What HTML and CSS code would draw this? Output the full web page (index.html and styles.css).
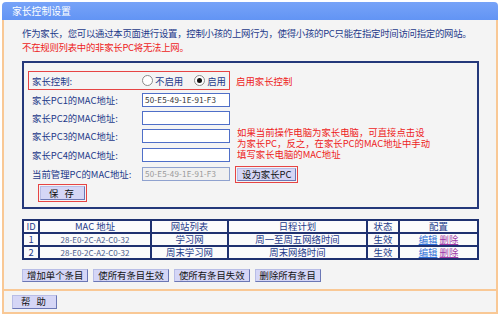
FILE: index.html
```html
<!DOCTYPE html>
<html lang="zh-CN">
<head>
    <meta charset="UTF-8">
    <title>家长控制设置</title>
    <link rel="stylesheet" href="styles.css">
</head>
<body>
<div class="page">
    <div class="title">家长控制设置</div>

    <div class="content">
        <p class="intro">作为家长，您可以通过本页面进行设置，控制小孩的上网行为，使得小孩的PC只能在指定时间访问指定的网站。</p>
        <p class="intro warn">不在规则列表中的非家长PC将无法上网。</p>

        <div class="panel">
            <div class="form">
                <div class="row switch mark">
                    <span class="label">家长控制:</span>
                    <span class="radio"></span><span class="opt">不启用</span>
                    <span class="radio on"></span><span class="opt">启用</span>
                </div>
                <div class="side hint">启用家长控制</div>

                <div class="row">
                    <span class="label">家长PC1的MAC地址:</span>
                    <span class="input">50-E5-49-1E-91-F3</span>
                </div>
                <div class="row">
                    <span class="label">家长PC2的MAC地址:</span>
                    <span class="input"></span>
                </div>
                <div class="row">
                    <span class="label">家长PC3的MAC地址:</span>
                    <span class="input"></span>
                </div>
                <div class="row">
                    <span class="label">家长PC4的MAC地址:</span>
                    <span class="input"></span>
                </div>
                <div class="side note">如果当前操作电脑为家长电脑，可直接点击设<br>为家长PC，反之，在家长PC的MAC地址中手动<br>填写家长电脑的MAC地址</div>

                <div class="row">
                    <span class="label">当前管理PC的MAC地址:</span>
                    <span class="input off">50-E5-49-1E-91-F3</span>
                </div>
                <div class="side">
                    <span class="mark pad"><button class="btn">设为家长PC</button></span>
                </div>

                <div class="row save">
                    <span class="mark pad"><button class="btn wide">保 存</button></span>
                </div>
            </div>
        </div>

        <table class="rules">
            <tr>
                <th class="c-id">ID</th>
                <th class="c-mac">MAC 地址</th>
                <th class="c-site">网站列表</th>
                <th class="c-plan">日程计划</th>
                <th class="c-state">状态</th>
                <th>配置</th>
            </tr>
            <tr>
                <td>1</td>
                <td class="mac">28-E0-2C-A2-C0-32</td>
                <td>学习网</td>
                <td>周一至周五网络时间</td>
                <td>生效</td>
                <td><a href="#" class="edit">编辑</a> <a href="#" class="del">删除</a></td>
            </tr>
            <tr>
                <td>2</td>
                <td class="mac">28-E0-2C-A2-C0-32</td>
                <td>周末学习网</td>
                <td>周末网络时间</td>
                <td>生效</td>
                <td><a href="#" class="edit">编辑</a> <a href="#" class="del">删除</a></td>
            </tr>
        </table>

        <div class="actions">
            <button class="btn">增加单个条目</button>
            <button class="btn">使所有条目生效</button>
            <button class="btn">使所有条目失效</button>
            <button class="btn">删除所有条目</button>
        </div>
    </div>

    <div class="footer">
        <button class="btn wide">帮 助</button>
    </div>
</div>
</body>
</html>
```

FILE: styles.css
```css
body {
    margin: 0;
    background: #fff;
    font-family: "Noto Sans CJK SC", "DejaVu Sans", sans-serif;
    font-size: 9.4px;
    color: #1d3a8a;
}

.page {
    width: 496px;
    margin: 2px 2px 0;
}

.title {
    height: 18px;
    line-height: 18px;
    padding-left: 10px;
    font-size: 9.8px;
    color: #fff;
    background: linear-gradient(#77a3f8, #6294f4);
    border-radius: 4px 4px 0 0;
}

.content {
    background: #f4f4f4;
    border-left: 2px solid #f9c895;
    border-right: 2px solid #f9c895;
    border-bottom: 2px solid #f9c895;
    padding: 7px 17px 7px 18px;
}

.intro {
    margin: 0;
    line-height: 13.5px;
    white-space: nowrap;
    letter-spacing: -0.25px;
}

.warn {
    color: #ee1c1c;
}

.panel {
    margin-top: 7px;
    border: 2px solid #24387a;
    padding: 8px 4px 6px;
}

.form {
    display: grid;
    grid-template-columns: 202px 1fr;
}

.row {
    display: flex;
    align-items: center;
    height: 18px;
    grid-column: 1;
    white-space: nowrap;
}

.label {
    width: 110px;
    padding-left: 4px;
    flex: none;
}

.mark {
    border: 1px solid #e64444;
}

.switch {
    height: 17px;
    margin-bottom: 1px;
}

.switch .label {
    width: 110px;
    padding-left: 3px;
}

.radio {
    width: 9px;
    height: 9px;
    border: 1px solid #8a8a8a;
    border-radius: 50%;
    background: #fff;
    display: flex;
    align-items: center;
    justify-content: center;
    flex: none;
}

.radio.on::after {
    content: "";
    width: 5px;
    height: 5px;
    border-radius: 50%;
    background: #111;
}

.opt {
    margin: 0 11px 0 2px;
    flex: none;
}

.input {
    width: 85px;
    height: 12px;
    line-height: 12px;
    border: 1px solid #4f6fc8;
    background: #fff;
    padding-left: 2px;
    font-size: 8px;
    color: #333;
    letter-spacing: 0.2px;
}

.input.off {
    background: #f0f0f0;
    border-color: #8fa2cf;
    color: #999;
}

.side {
    grid-column: 2;
    padding-left: 6px;
    display: flex;
    align-items: center;
}

.hint {
    grid-row: 1;
    color: #ee1c1c;
}

.note {
    grid-row: 4 / 6;
    align-self: end;
    margin-bottom: 5px;
    padding-left: 7px;
    line-height: 11px;
    color: #ee1c1c;
    white-space: nowrap;
}

.side .pad {
    margin-left: -1px;
}

.pad {
    padding: 1px;
    display: inline-flex;
}

.save {
    height: 16px;
    margin-top: 2px;
    padding-left: 10px;
}

.btn {
    font-family: inherit;
    font-size: 9.4px;
    color: #111;
    background: #d5d6f6;
    border: 1px solid #6b77b5;
    border-top-color: #b8bde6;
    border-left-color: #b8bde6;
    height: 13px;
    line-height: 11px;
    padding: 0 4px;
    margin: 0;
    cursor: pointer;
    white-space: nowrap;
}

.btn.wide {
    padding: 0 8px;
    letter-spacing: 2px;
    height: 14px;
}

.rules {
    width: 457px;
    margin-top: 10px;
    border-collapse: collapse;
    background: #fbfbfb;
}

.rules th,
.rules td {
    border: 2px solid #1f3170;
    height: 11px;
    padding: 0;
    text-align: center;
    font-weight: normal;
    line-height: 11px;
    white-space: nowrap;
}

.c-id { width: 14px; }
.c-mac { width: 110px; }
.c-site { width: 75px; }
.c-plan { width: 137px; }
.c-state { width: 30px; }

.rules .mac {
    font-size: 8px;
    color: #4a5a8a;
}

.rules a {
    color: #2f6fd6;
    text-decoration: underline;
}

.rules a.del {
    color: #a03aa6;
}

.actions {
    display: flex;
    gap: 5px;
    margin-top: 9px;
}

.footer {
    background: #f4f4f4;
    border-left: 2px solid #f9c895;
    border-right: 2px solid #f9c895;
    border-bottom: 2px solid #f9c895;
    padding: 3px 8px 3px;
}
```
